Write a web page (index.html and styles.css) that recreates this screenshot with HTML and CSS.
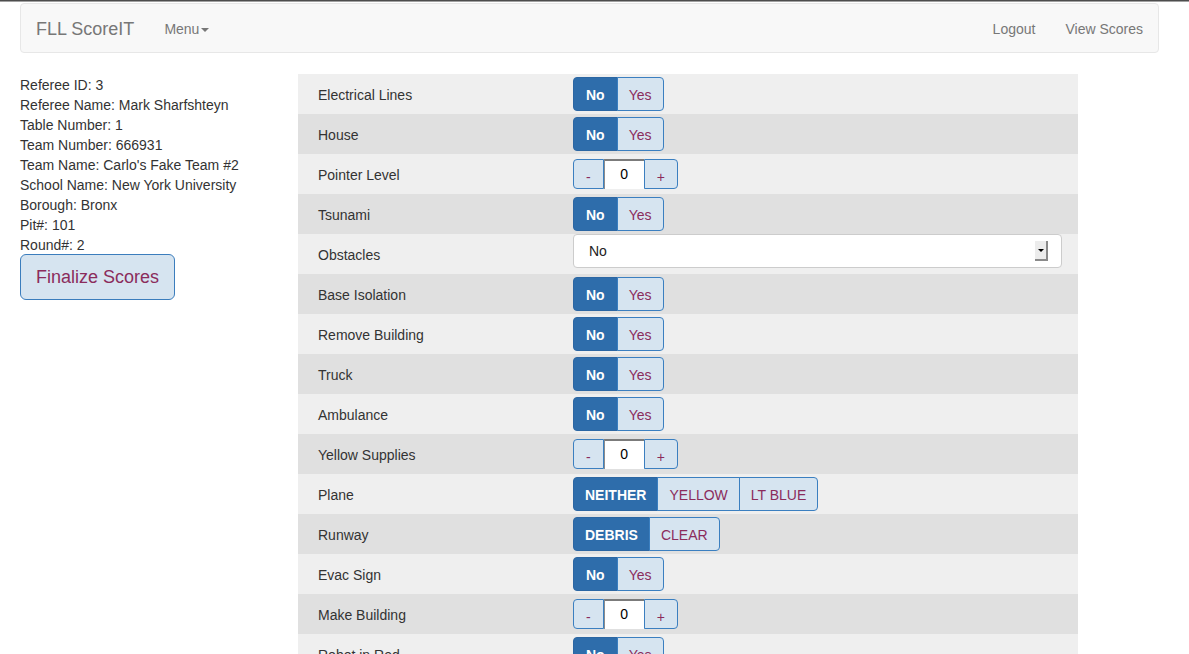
FILE: index.html
```html
<!DOCTYPE html>
<html>
<head>
<meta charset="utf-8">
<title>FLL ScoreIT</title>
<link rel="stylesheet" href="styles.css">
</head>
<body>
<div class="topline"></div>
<nav class="navbar">
  <a class="brand">FLL ScoreIT</a>
  <a class="navlink">Menu<span class="caret"></span></a>
  <div class="navright">
    <a class="navlink">Logout</a>
    <a class="navlink">View Scores</a>
  </div>
</nav>
<div class="main">
  <aside class="info">
    <div>Referee ID: 3</div>
    <div>Referee Name: Mark Sharfshteyn</div>
    <div>Table Number: 1</div>
    <div>Team Number: 666931</div>
    <div>Team Name: Carlo's Fake Team #2</div>
    <div>School Name: New York University</div>
    <div>Borough: Bronx</div>
    <div>Pit#: 101</div>
    <div>Round#: 2</div>
    <button class="finalize">Finalize Scores</button>
  </aside>
  <section class="scores">
    <div class="row"><div class="label">Electrical Lines</div><div class="seg"><button class="on">No</button><button>Yes</button></div></div>
    <div class="row"><div class="label">House</div><div class="seg"><button class="on">No</button><button>Yes</button></div></div>
    <div class="row"><div class="label">Pointer Level</div><div class="stepper"><button>-</button><span class="val">0</span><button>+</button></div></div>
    <div class="row"><div class="label">Tsunami</div><div class="seg"><button class="on">No</button><button>Yes</button></div></div>
    <div class="row"><div class="label">Obstacles</div><div class="select"><span>No</span><span class="arrow"></span></div></div>
    <div class="row"><div class="label">Base Isolation</div><div class="seg"><button class="on">No</button><button>Yes</button></div></div>
    <div class="row"><div class="label">Remove Building</div><div class="seg"><button class="on">No</button><button>Yes</button></div></div>
    <div class="row"><div class="label">Truck</div><div class="seg"><button class="on">No</button><button>Yes</button></div></div>
    <div class="row"><div class="label">Ambulance</div><div class="seg"><button class="on">No</button><button>Yes</button></div></div>
    <div class="row"><div class="label">Yellow Supplies</div><div class="stepper"><button>-</button><span class="val">0</span><button>+</button></div></div>
    <div class="row"><div class="label">Plane</div><div class="seg caps"><button class="on">NEITHER</button><button>YELLOW</button><button>LT BLUE</button></div></div>
    <div class="row"><div class="label">Runway</div><div class="seg caps"><button class="on">DEBRIS</button><button>CLEAR</button></div></div>
    <div class="row"><div class="label">Evac Sign</div><div class="seg"><button class="on">No</button><button>Yes</button></div></div>
    <div class="row"><div class="label">Make Building</div><div class="stepper"><button>-</button><span class="val">0</span><button>+</button></div></div>
    <div class="row"><div class="label">Robot in Red</div><div class="seg"><button class="on">No</button><button>Yes</button></div></div>
  </section>
</div>
</body>
</html>
```
FILE: styles.css
```css
html, body {
  margin: 0;
  padding: 0;
  overflow: hidden;
  background: #fff;
}
body {
  font-family: "Liberation Sans", Arial, Helvetica, sans-serif;
  font-size: 14px;
  line-height: 20px;
  color: #333;
}
.topline {
  height: 2px;
  background: linear-gradient(#4d4d4d 0, #4d4d4d 1px, #a0a0a0 1px, #a0a0a0 2px);
}
.navbar {
  box-sizing: border-box;
  height: 50px;
  margin: 1px 30px 21px 20px;
  padding-top: 2px;
  background: #f8f8f8;
  border: 1px solid #e7e7e7;
  border-radius: 4px;
  display: flex;
  align-items: center;
}
.brand {
  padding: 0 15px;
  font-size: 18px;
  color: #777;
}
.navlink {
  padding: 0 15px;
  color: #777;
}
.caret {
  display: inline-block;
  width: 0;
  height: 0;
  margin-left: 2px;
  vertical-align: middle;
  border-top: 4px solid #777;
  border-left: 4px solid transparent;
  border-right: 4px solid transparent;
}
.navright {
  margin-left: auto;
  display: flex;
}
.main {
  display: flex;
  padding-left: 20px;
}
.info {
  width: 278px;
  padding-top: 1px;
}
.finalize {
  margin-top: -1px;
  font-family: inherit;
  font-size: 18px;
  line-height: 24px;
  padding: 10px 15px;
  background: #d6e4f0;
  color: #8b2c5c;
  border: 1px solid #3b7dbd;
  border-radius: 6px;
}
.scores {
  width: 780px;
}
.row {
  height: 40px;
  display: flex;
  align-items: center;
  background: #efefef;
}
.row:nth-child(even) {
  background: #e0e0e0;
}
.label {
  width: 255px;
  padding-left: 20px;
  flex: none;
  padding-top: 2px;
}
.seg {
  display: flex;
}
.seg button {
  height: 34px;
  padding: 1px 11px 0;
  font-family: inherit;
  font-size: 14px;
  background: #d6e4f0;
  color: #8b2c5c;
  border: 1px solid #3b7fc0;
  margin-left: -1px;
  border-radius: 0;
}
.seg button:first-child {
  margin-left: 0;
  padding: 1px 12px 0;
  border-radius: 4px 0 0 4px;
}
.seg.caps button:first-child {
  padding: 1px 11px 0;
}
.seg button:last-child {
  border-radius: 0 4px 4px 0;
}
.seg button.on {
  background: #2e6dab;
  border-color: #2b66a3;
  color: #fff;
  font-weight: bold;
}
.stepper {
  display: flex;
  height: 30px;
}
.stepper button {
  height: 30px;
  padding: 6px 12px 0;
  font-family: inherit;
  font-size: 14px;
  background: #d6e4f0;
  color: #8b2c5c;
  border: 1px solid #3b7fc0;
  border-radius: 4px 0 0 4px;
}
.stepper button:last-child {
  border-radius: 0 4px 4px 0;
}
.stepper .val {
  box-sizing: border-box;
  width: 40px;
  height: 30px;
  background: #fff;
  border-top: 2px solid #7b7b7b;
  border-left: 1px solid #8c8c8c;
  text-align: center;
  line-height: 26px;
  color: #000;
  font-size: 14px;
}
.select {
  box-sizing: border-box;
  width: 489px;
  height: 34px;
  margin-top: -6px;
  background: #fff;
  border: 1px solid #ccc;
  border-radius: 4px;
  display: flex;
  align-items: center;
  padding: 0 13px 0 15px;
  color: #222;
}
.select .arrow {
  margin-left: auto;
  box-sizing: border-box;
  width: 13px;
  height: 20px;
  background: #ececec;
  border-right: 2px solid #8a8a8a;
  border-bottom: 2px solid #8a8a8a;
  position: relative;
}
.select .arrow::after {
  content: "";
  position: absolute;
  left: 3px;
  top: 8px;
  border-top: 3px solid #000;
  border-left: 3px solid transparent;
  border-right: 3px solid transparent;
}
```
